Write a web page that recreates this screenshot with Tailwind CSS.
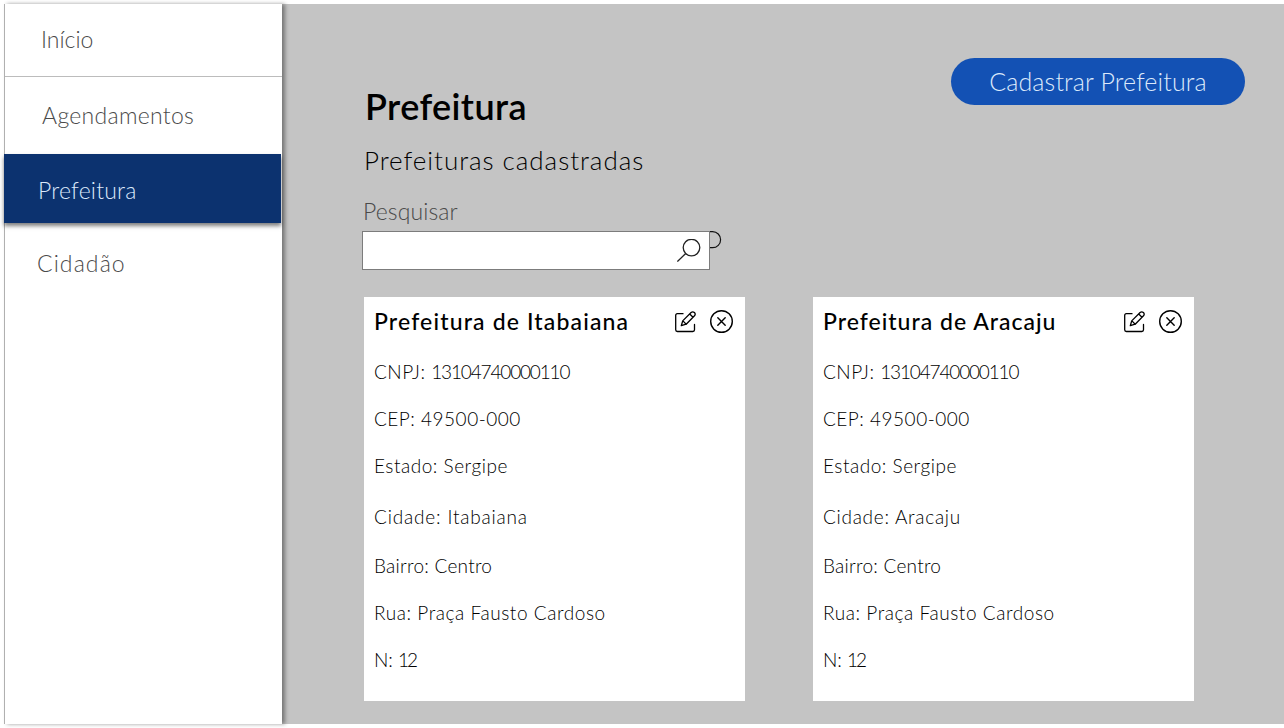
<!DOCTYPE html>
<html lang="pt-BR">
<head>
<meta charset="utf-8">
<title>Prefeitura</title>
<script src="https://cdn.jsdelivr.net/npm/@tailwindcss/browser@4"></script>
</head>
<body class="bg-white font-['Lato',sans-serif] font-light">
<svg class="hidden">
  <symbol id="edit" viewBox="0 0 22 22"><g fill="none" stroke="currentColor" stroke-width="1.3" stroke-linecap="round" stroke-linejoin="round"><path d="M8 2.7H2.4Q.7 2.7 .7 4.4V18.8Q.7 20.5 2.4 20.5H17.8Q19.5 20.5 19.5 18.8V13.5"/><path d="M6.3 14.7L7.7 9.9L16.1 1.5Q17.7 .1 19.4 1.5Q20.9 3.1 19.5 4.8L11.2 13.2Z M7.9 9.9L11.2 13.2M14.7 3L18 6.2"/></g></symbol>
  <symbol id="remove" viewBox="0 0 24 24"><g fill="none" stroke="currentColor" stroke-width="1.4" stroke-linecap="round"><circle cx="11.5" cy="11.5" r="10.8"/><path d="M7.8 7.8L15.2 15.2M15.2 7.8L7.8 15.2"/></g></symbol>
</svg>
<div class="flex h-[728px] w-[1284px] overflow-hidden py-1 pl-1">
  <aside class="relative z-10 h-[720px] w-[278px] shrink-0 border-l border-[#b0b0b0] bg-white shadow-[3px_0_4px_rgba(0,0,0,0.4)]">
    <nav class="flex flex-col text-[23px] text-[#4a4a4a]">
      <a class="flex h-[73px] items-center border-b border-[#bcbcbc] pb-0.5 pl-9">Início</a>
      <a class="flex h-[77px] items-center pl-[37px] tracking-[0.3px]">Agendamentos</a>
      <a class="-ml-px flex h-[69px] w-[277px] items-center bg-[#0c326f] pl-[34px] pt-[3px] tracking-[0.2px] text-[#dce9fb] shadow-[0_3px_4px_rgba(0,0,0,0.5)]">Prefeitura</a>
      <a class="flex h-20 items-center pl-8 tracking-[1.1px]">Cidadão</a>
    </nav>
  </aside>
  <main class="h-[720px] grow bg-[#c4c4c4] pl-20 pt-[54px] text-black">
    <header class="flex h-[173px] justify-between pr-[39px]">
      <div>
        <h1 class="ml-[3px] mt-[26px] text-[36px] font-semibold leading-[44px] tracking-[0.4px]">Prefeitura</h1>
        <p class="ml-0.5 mt-[16px] text-[26px] leading-8 tracking-[0.95px]">Prefeituras cadastradas</p>
        <label class="ml-px mt-[19px] block text-[23px] leading-8 tracking-[0.1px] text-[#4a4a4a]">Pesquisar</label>
      </div>
      <button class="h-[47px] w-[294px] whitespace-nowrap rounded-full bg-[#1351b4] text-[25px] tracking-[0.15px] text-[#dce9fb]">Cadastrar Prefeitura</button>
    </header>
    <div class="flex items-start">
      <div class="flex h-[39px] w-[348px] items-center justify-end border border-[#7c7c7c] bg-white pr-2">
        <svg class="h-6 w-6" viewBox="0 0 24 24" fill="none" stroke="#222" stroke-width="1.3"><circle cx="14.5" cy="8.6" r="8.3"/><path d="M8.7 14.5L.4 22.6"/></svg>
      </div>
      <svg class="h-[18px] w-3" viewBox="0 0 12 18" fill="none" stroke="#111" stroke-width="1.2"><path d="M0 .7H2.6A8 8 0 0 1 2.6 16.7H0"/></svg>
    </div>
    <section class="ml-0.5 mt-[27px] flex gap-[68px]">
      <article class="h-[404px] w-[381px] bg-white pl-[11px] pt-[9px]">
        <div class="flex h-8 items-center">
          <h2 class="-ml-px w-[301px] whitespace-nowrap pb-0.5 text-[23px] font-medium tracking-[1.15px]">Prefeitura de Itabaiana</h2>
          <svg class="h-[22px] w-[22px]"><use href="#edit"/></svg>
          <svg class="ml-[13px] h-6 w-6"><use href="#remove"/></svg>
        </div>
        <div class="-ml-px mt-[22px] text-[19px] leading-6">
          <p><span class="tracking-[0.5px]">CNPJ: </span><span class="tracking-[-1.15px]">13104740000110</span></p>
          <p class="mt-[23px] tracking-[0.5px]">CEP: 49500-000</p>
          <p class="mt-[23px] tracking-[0.52px]">Estado: Sergipe</p>
          <p class="mt-[27px] tracking-[0.82px]">Cidade: Itabaiana</p>
          <p class="mt-[25px] tracking-[0.25px]">Bairro: Centro</p>
          <p class="mt-[23px] tracking-[0.57px]">Rua: Praça Fausto Cardoso</p>
          <p class="mt-[23px]">N: <span class="tracking-[-2px]">12</span></p>
        </div>
      </article>
      <article class="h-[404px] w-[381px] bg-white pl-[11px] pt-[9px]">
        <div class="flex h-8 items-center">
          <h2 class="-ml-px w-[301px] whitespace-nowrap pb-0.5 text-[23px] font-medium tracking-[1px]">Prefeitura de Aracaju</h2>
          <svg class="h-[22px] w-[22px]"><use href="#edit"/></svg>
          <svg class="ml-[13px] h-6 w-6"><use href="#remove"/></svg>
        </div>
        <div class="-ml-px mt-[22px] text-[19px] leading-6">
          <p><span class="tracking-[0.5px]">CNPJ: </span><span class="tracking-[-1.15px]">13104740000110</span></p>
          <p class="mt-[23px] tracking-[0.5px]">CEP: 49500-000</p>
          <p class="mt-[23px] tracking-[0.52px]">Estado: Sergipe</p>
          <p class="mt-[27px] tracking-[0.72px]">Cidade: Aracaju</p>
          <p class="mt-[25px] tracking-[0.25px]">Bairro: Centro</p>
          <p class="mt-[23px] tracking-[0.57px]">Rua: Praça Fausto Cardoso</p>
          <p class="mt-[23px]">N: <span class="tracking-[-2px]">12</span></p>
        </div>
      </article>
    </section>
  </main>
</div>
</body>
</html>
